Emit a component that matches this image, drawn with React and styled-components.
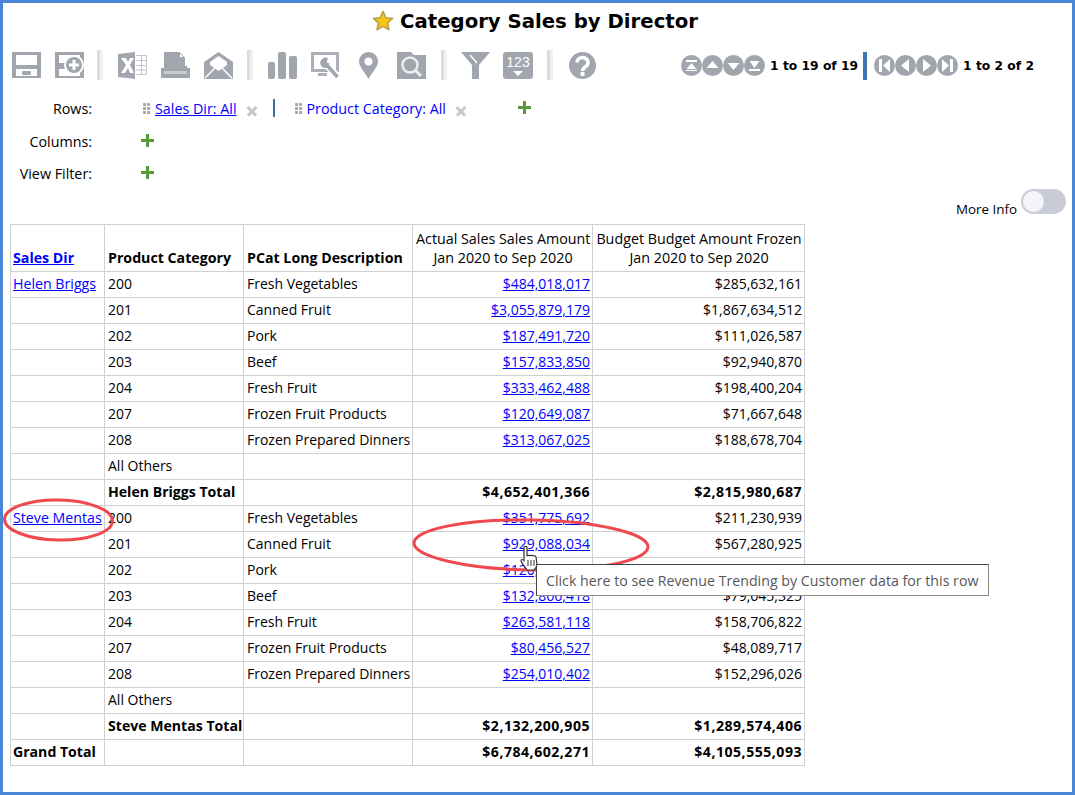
import React from 'react';
import styled, { createGlobalStyle } from 'styled-components';

const Global = createGlobalStyle`
  html, body { margin: 0; padding: 0; background: #fff; }
  body { font-family: "Open Sans", "Noto Sans", sans-serif; }
`;

const Frame = styled.div`
  position: relative; box-sizing: border-box; width: 1075px; height: 795px;
  border: 3px solid #4a86d8; background: #fff; overflow: hidden;
`;
const TitleBar = styled.div`
  display: flex; justify-content: center; align-items: center; gap: 6px; height: 36px; padding-right: 5px;
`;
const Title = styled.h1`
  margin: 0; font: bold 19.7px "DejaVu Sans", Verdana, sans-serif; color: #000;
`;
const Toolbar = styled.div`
  display: flex; align-items: center; height: 53px; padding: 0 7px 0 9px;
`;
const IconGroup = styled.div`display: flex; align-items: center; gap: ${p => p.$gap || 14}px;`;
const IconSep = styled.span`
  width: 6px; height: 30px; margin: -2px ${p => p.$r}px 0 ${p => p.$l}px;
  background: linear-gradient(to right, #dcdcdc 50%, #f0f0f0 50%);
`;
const Pager = styled.div`display: flex; align-items: center; margin-left: auto; padding-right: 31px;`;
const RoundGroup = styled.div`display: flex; align-items: center; margin-right: 5px;`;
const PageText = styled.span`font: bold 12.3px "DejaVu Sans", Verdana, sans-serif; color: #000; white-space: nowrap;`;
const PagerSep = styled.span`width: 4px; height: 28px; background: #3d74b4; margin: 0 7px 0 5px;`;

const FilterRow = styled.div`
  display: flex; align-items: center; height: 32px; margin-bottom: ${p => p.$first ? 1 : 0}px;
`;
const FilterLabel = styled.span`
  box-sizing: border-box; width: 89px; text-align: right; font-size: 14.3px; color: #000; flex: none;
`;
const FilterSlot = styled.div`display: flex; align-items: center; margin-left: 49px;`;
const Grip = styled.span`
  width: 8px; height: 11px; margin: 0 4px 0 2px;
  background-image: radial-gradient(circle at 1.5px 1.5px, #a8a8a8 1.4px, transparent 1.5px);
  background-size: 4px 4px;
`;
const ChipLink = styled.a`
  font-size: 14.3px; color: #0000ff; text-decoration: ${p => p.$under ? 'underline' : 'none'}; white-space: nowrap;
`;
const Close = styled.span`
  position: relative; display: block; width: 10px; height: 10px; margin: 5px 0 0 10px; flex: none;
  &::before, &::after {
    content: ""; position: absolute; left: -1px; right: -1px; top: 4px; height: 2.5px; background: #c8c8c8;
  }
  &::before { transform: rotate(45deg); }
  &::after { transform: rotate(-45deg); }
`;
const ChipSep = styled.span`width: 2px; height: 18px; background: #3d6ea8; margin: 0 18px 0 16px;`;
const Plus = styled.span`
  position: relative; display: block; width: 13px; height: 13px; flex: none;
  margin: -2px 0 0 ${p => p.$m || 0}px;
  &::before, &::after { content: ""; position: absolute; background: #5a9a3a; }
  &::before { left: 0; right: 0; top: 5px; height: 3px; }
  &::after { top: 0; bottom: 0; left: 5px; width: 3px; }
`;

const InfoRow = styled.div`
  display: flex; justify-content: flex-end; height: 35px; padding-right: 6px; gap: 4px;
`;
const InfoLabel = styled.span`font-size: 13.4px; color: #000; margin-top: 12px; line-height: 16px;`;
const Toggle = styled.span`
  position: relative; width: 45px; height: 25px; border-radius: 13px; background: #c9ccd6;
  &::after { content: ""; position: absolute; left: 2px; top: 2px; width: 21px; height: 21px; border-radius: 50%; background: #f4f5fa; }
`;

const Table = styled.table`
  border-collapse: collapse; table-layout: fixed; width: 795px; margin-left: 7px;
  font-size: 14px; color: #000;
`;
const Th = styled.th`
  border: 1px solid #d0d0d0; padding: 0 2px 4px 3px; height: 42px; vertical-align: bottom; line-height: 19px;
  font-size: ${p => p.$light ? 14.3 : 14.2}px;
  font-weight: ${p => p.$light ? 400 : 700}; text-align: ${p => p.$light ? 'center' : 'left'}; white-space: nowrap;
  padding-left: ${p => p.$first ? 2 : 3}px;
`;
const Td = styled.td`
  border: 1px solid #d0d0d0; padding: 0 2px 1px ${p => p.$first ? 2 : 3}px; height: 24px; line-height: 20px;
  white-space: nowrap; overflow: visible;
  text-align: ${p => p.$right ? 'right' : 'left'}; font-weight: ${p => p.$bold ? 700 : 400};
  font-size: ${p => p.$bold ? 14.1 : 14}px;
  letter-spacing: ${p => p.$wide ? 0.5 : 0}px;
`;
const Link = styled.a`color: #0000ff; text-decoration: underline;`;
const NameLink = styled(Link)`font-size: 14.2px;`;

const Annotations = styled.svg`position: absolute; left: -3px; top: -3px; width: 1075px; height: 795px; pointer-events: none;`;
const Tip = styled.div`
  position: absolute; left: 533px; top: 561px; box-sizing: border-box; width: 453px; height: 32px;
  display: flex; align-items: center; padding-left: 9px;
  background: #fff; border: 1px solid #8a8a8a; border-left-color: #444; border-top-color: #444;
  font-size: 14.2px; color: #575757; white-space: nowrap;
`;
const Cursor = styled.svg`position: absolute; left: 517px; top: 543px; width: 19px; height: 25px;`;

const G = '#a1a5ae';
const L = '#c4c6cc';
const Ic = styled.svg`display: block; flex: none;`;
const I = ({ w = 29, h = 27, children }) => <Ic width={w} height={h} viewBox={`0 0 ${w} ${h}`}>{children}</Ic>;

const Save = () => <I><path fill={G} d="M0 0h29v26H0z"/><path fill="#fff" d="M4 3h21v10H4zM4 17h21v7H4z"/><rect x="10" y="19" width="9" height="4" rx="1" fill={G}/></I>;
const AddView = () => <I><path fill={G} d="M0 0h29v26H0z"/><path fill="#fff" d="M4 3h21v8H4zM4 17h21v7H4z"/><circle cx="19" cy="13" r="9" fill={G} stroke="#fff" strokeWidth="2"/><path stroke="#fff" strokeWidth="3" d="M19 8v10M14 13h10"/></I>;
const Excel = () => <I><path fill={G} d="M0 2l17-2v27L0 25z"/><path fill="#fff" d="M3 6h5l2 4 2-4h4l-4 7 4 8h-4l-2-5-3 5H3l5-8z"/><path fill="none" stroke={L} strokeWidth="1" d="M18 3.500h10.500v19H18M18 8.500h10M18 13.500h10M18 18h10M23.500 3.500v19"/></I>;
const Print = () => <I><path fill={G} d="M3 0h15l6 6v8H3z"/><path fill="#fff" d="M18 0v6h6z"/><path fill="none" stroke={G} strokeWidth="1" d="M18.500 .5l5 5h-5z"/><path fill={G} d="M0 14h29v12H0z"/><path fill="#fff" d="M0 13h3v3H0zM26 13h3v3h-3z"/><path fill="#c8cace" d="M3 19h23v3H3z"/></I>;
const Mail = () => <I><path fill={G} d="M14.500 0L29 10v17H0V10z"/><path fill="#fff" d="M14.500 4L23 10v3l-8.500 6L6 13v-3z"/><path fill="none" stroke="#fff" strokeWidth="1.500" d="M1 26l10-10M28 26L18 16"/></I>;
const Bars = () => <I><rect x="0" y="10" width="7" height="17" rx="2" fill={G}/><rect x="10" y="0" width="8" height="27" rx="2" fill={G}/><rect x="21" y="4" width="8" height="23" rx="2" fill={G}/></I>;
const Tool = () => <I><path fill="none" stroke="#adb0b8" strokeWidth="3" d="M1.500 1.500h25v17h-25zM7 22.500h9"/><path stroke="#fff" strokeWidth="7" d="M14 11l12 13"/><path stroke={G} strokeWidth="3.500" d="M14 11l12.500 14"/><path fill={G} d="M17 6a5.500 5.500 0 0 0-7.500 6.500A5.500 5.500 0 0 0 17 15.500l1.500-4-3-1z"/></I>;
const Pin = () => <I><path fill={G} d="M14.500 0a9.500 9.500 0 0 1 9.500 9.500C24 15 17.500 21 14.500 27 11.500 21 5 15 5 9.500A9.500 9.500 0 0 1 14.500 0z"/><circle cx="14.500" cy="9.500" r="4" fill="#fff"/></I>;
const FolderSearch = () => <I><path fill={G} d="M0 0h14l3 3h12v24H0z"/><circle cx="13" cy="13" r="7.500" fill="none" stroke="#eceded" strokeWidth="2.500"/><path stroke="#eceded" strokeWidth="3" d="M18.500 18.500l5.500 5.500"/></I>;
const Funnel = () => <I><path fill={G} d="M0 0h29L18 13v14h-7V13z"/><path stroke="#fff" strokeWidth="1.500" d="M9 3l7 8"/></I>;
const Num = () => <I w={30}><rect width="30" height="27" rx="3" fill={G}/><text x="15" y="15" textAnchor="middle" fontFamily="Liberation Sans, sans-serif" fontSize="14" fill="#fff">123</text><path fill="#fff" d="M10 19h10l-5 5z"/></I>;
const Help = () => <I><circle cx="14.500" cy="13.500" r="13.500" fill={G}/><path fill="none" stroke="#fff" strokeWidth="3.500" d="M9 10.500a5.500 5 0 1 1 8.500 4.200c-2 1.300-3 2-3 4.300"/><rect x="12.500" y="20" width="4" height="4" fill="#fff"/></I>;

const Round = ({ children }) => (
  <Ic width="21" height="21" viewBox="0 0 21 21"><circle cx="10.500" cy="10.500" r="10.500" fill={G}/><g fill="#fff">{children}</g></Ic>
);

const rows = [
  ['Helen Briggs','200','Fresh Vegetables','$484,018,017','$285,632,161'],
  ['','201','Canned Fruit','$3,055,879,179','$1,867,634,512'],
  ['','202','Pork','$187,491,720','$111,026,587'],
  ['','203','Beef','$157,833,850','$92,940,870'],
  ['','204','Fresh Fruit','$333,462,488','$198,400,204'],
  ['','207','Frozen Fruit Products','$120,649,087','$71,667,648'],
  ['','208','Frozen Prepared Dinners','$313,067,025','$188,678,704'],
  ['','All Others','','',''],
  ['','Helen Briggs Total','','$4,652,401,366','$2,815,980,687','t'],
  ['Steve Mentas','200','Fresh Vegetables','$351,775,692','$211,230,939'],
  ['','201','Canned Fruit','$929,088,034','$567,280,925'],
  ['','202','Pork','$120,418,305','$73,402,118'],
  ['','203','Beef','$132,866,418','$79,645,325'],
  ['','204','Fresh Fruit','$263,581,118','$158,706,822'],
  ['','207','Frozen Fruit Products','$80,456,527','$48,089,717'],
  ['','208','Frozen Prepared Dinners','$254,010,402','$152,296,026'],
  ['','All Others','','',''],
  ['','Steve Mentas Total','','$2,132,200,905','$1,289,574,406','t'],
  ['Grand Total','','','$6,784,602,271','$4,105,555,093','g'],
];

export default function App() {
  return (
    <Frame>
      <Global />
      <TitleBar>
        <svg width="22" height="22" viewBox="0 0 24 24"><path fill="#f5c518" stroke="#b09a50" strokeWidth="1.500" strokeLinejoin="round" d="M12 1.500l3.200 6.900 7.300.9-5.400 5 1.500 7.400L12 18l-6.600 3.700 1.500-7.400-5.400-5 7.300-.9z"/></svg>
        <Title>Category Sales by Director</Title>
      </TitleBar>
      <Toolbar>
        <IconGroup><Save /><AddView /></IconGroup>
        <IconSep $l={13} $r={15} />
        <IconGroup><Excel /><Print /><Mail /></IconGroup>
        <IconSep $l={14} $r={15} />
        <IconGroup><Bars /><Tool /><Pin /><FolderSearch /></IconGroup>
        <IconSep $l={15} $r={14} />
        <IconGroup $gap={13}><Funnel /><Num /></IconGroup>
        <IconSep $l={14} $r={15} />
        <Help />
        <Pager>
          <RoundGroup>
            <Round><path d="M5 5h11v2H5zM10.500 8l5 6h-10z"/><path d="M5 15h11v1H5z"/></Round>
            <Round><path d="M10.500 6l6 7h-12z"/></Round>
            <Round><path d="M10.500 15l6-7h-12z"/></Round>
            <Round><path d="M5 14h11v2H5zM10.500 13l5-7h-10z"/></Round>
          </RoundGroup>
          <PageText>1 to 19 of 19</PageText>
          <PagerSep />
          <RoundGroup>
            <Round><path d="M5 4h3v13H5zM9 10.500L16 4v13z"/></Round>
            <Round><path d="M6 10.500L14 4v13z"/></Round>
            <Round><path d="M15 10.500L7 4v13z"/></Round>
            <Round><path d="M13 4h3v13h-3zM12 10.500L5 4v13z"/></Round>
          </RoundGroup>
          <PageText>1 to 2 of 2</PageText>
        </Pager>
      </Toolbar>
      <FilterRow $first>
        <FilterLabel>Rows:</FilterLabel>
        <FilterSlot>
          <Grip /><ChipLink $under href="#">Sales Dir: All</ChipLink><Close />
          <ChipSep />
          <Grip /><ChipLink href="#">Product Category: All</ChipLink><Close />
          <Plus $m={52} />
        </FilterSlot>
      </FilterRow>
      <FilterRow>
        <FilterLabel>Columns:</FilterLabel>
        <FilterSlot><Plus /></FilterSlot>
      </FilterRow>
      <FilterRow>
        <FilterLabel>View Filter:</FilterLabel>
        <FilterSlot><Plus /></FilterSlot>
      </FilterRow>
      <InfoRow><InfoLabel>More Info</InfoLabel><Toggle /></InfoRow>
      <Table>
        <colgroup><col width="94" /><col width="139" /><col width="169" /><col width="180" /><col width="212" /></colgroup>
        <thead>
          <tr>
            <Th $first><Link href="#">Sales Dir</Link></Th>
            <Th>Product Category</Th>
            <Th>PCat Long Description</Th>
            <Th $light>Actual Sales Sales Amount<br />Jan 2020 to Sep 2020</Th>
            <Th $light>Budget Budget Amount Frozen<br />Jan 2020 to Sep 2020</Th>
          </tr>
        </thead>
        <tbody>
          {rows.map((r, i) => {
            const total = !!r[5];
            return (
              <tr key={i}>
                <Td $first $bold={r[5] === 'g'}>{r[5] === 'g' ? r[0] : r[0] && <NameLink href="#">{r[0]}</NameLink>}</Td>
                <Td $bold={r[5] === 't'}>{r[1]}</Td>
                <Td>{r[2]}</Td>
                <Td $right $bold={total} $wide={total}>{total || !r[3] ? r[3] : <Link href="#">{r[3]}</Link>}</Td>
                <Td $right $bold={total} $wide={total}>{r[4]}</Td>
              </tr>
            );
          })}
        </tbody>
      </Table>
      <Annotations viewBox="0 0 1075 795">
        <ellipse cx="58.500" cy="520" rx="54" ry="20" fill="none" stroke="#f0484f" strokeWidth="3" transform="rotate(1 58 520)"/>
        <ellipse cx="531" cy="545" rx="117" ry="25" fill="none" stroke="#f0484f" strokeWidth="3" transform="rotate(1 531 545)"/>
      </Annotations>
      <Cursor viewBox="0 0 19 25">
        <path fill="#fff" stroke="#333" strokeWidth="1.200" strokeLinejoin="round" d="M4 1.500c0-1.500 3-1.500 3 0V10c0-1 3-1 3 0 0-1 3-1 3 0 0-.5 3-.5 3 1l1 7c0 3-2 5-3 6H7c-1-2-5-6-6-9 0-2 2-2 3 0z"/>
        <path stroke="#333" fill="none" strokeWidth="1" d="M8 14v6M11 14v6M14 14v6"/>
      </Cursor>
      <Tip>Click here to see Revenue Trending by Customer data for this row</Tip>
    </Frame>
  );
}
